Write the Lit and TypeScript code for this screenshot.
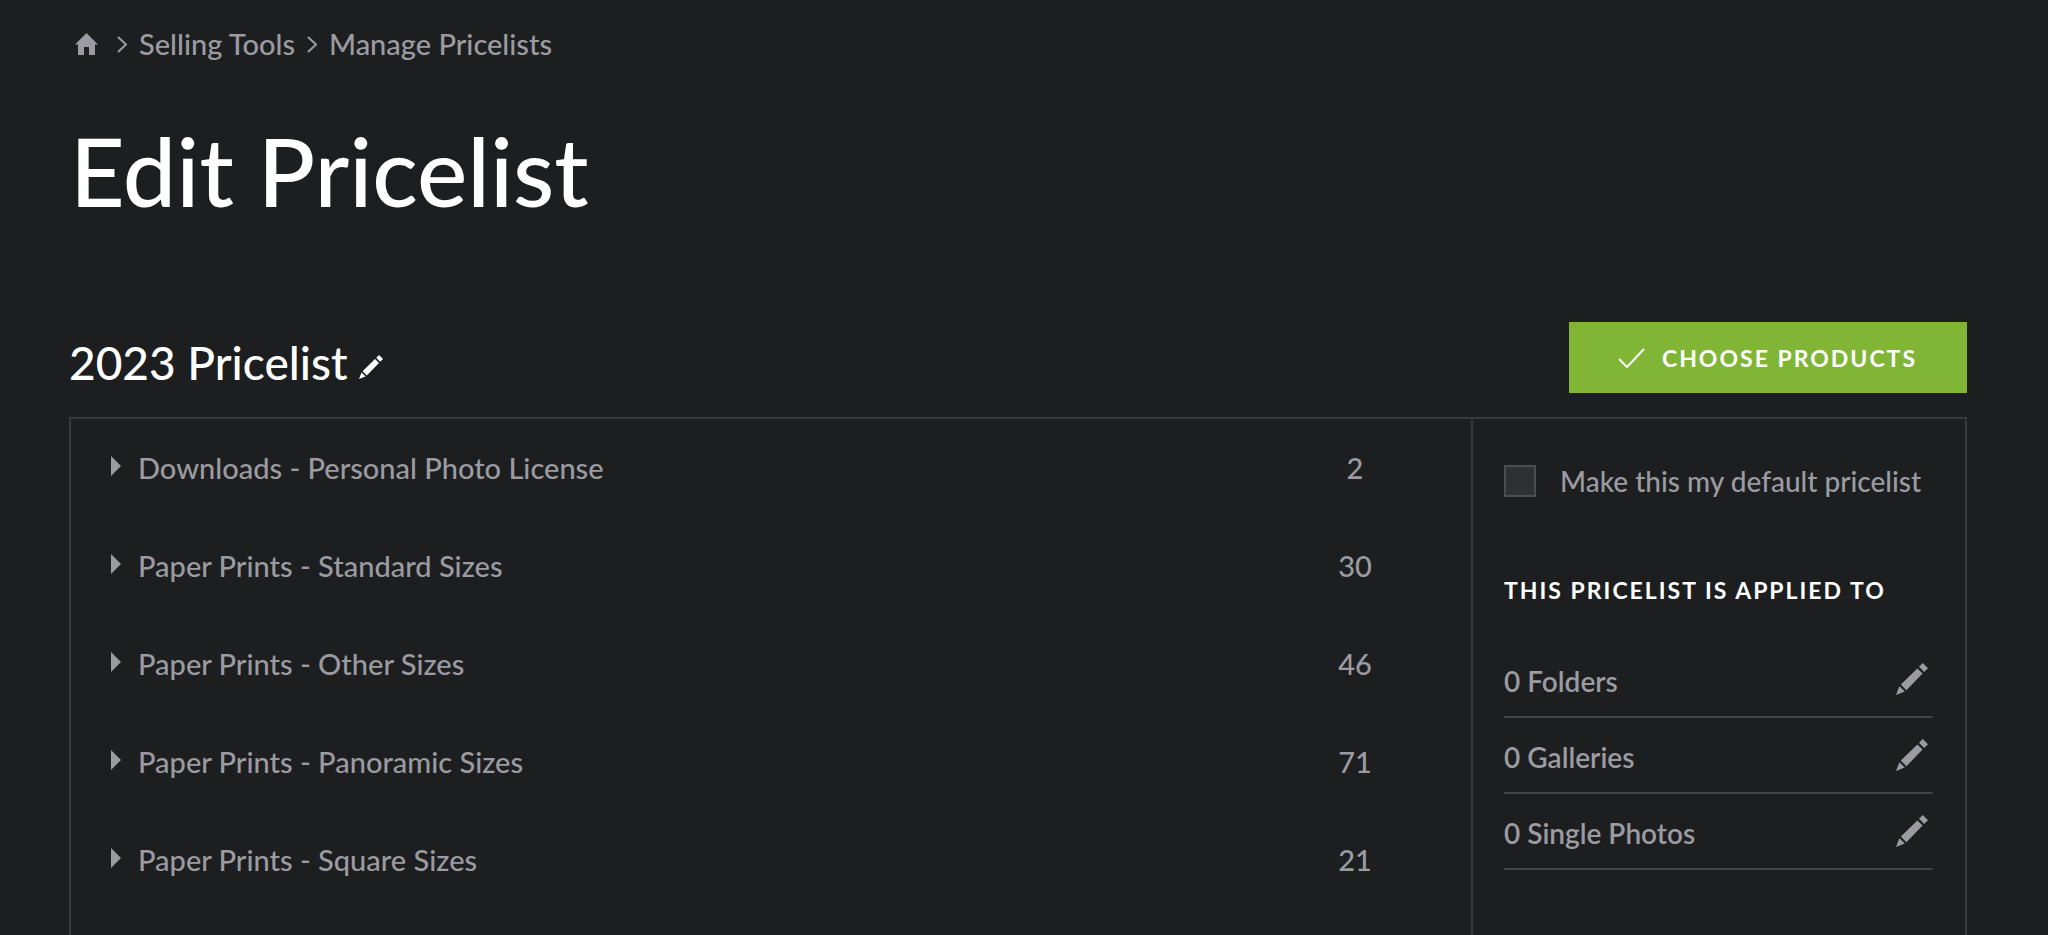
import { LitElement, html, css, svg } from "lit";
import { customElement, property } from "lit/decorators.js";

const groups = [
  { name: "Downloads - Personal Photo License", count: 2 },
  { name: "Paper Prints - Standard Sizes", count: 30 },
  { name: "Paper Prints - Other Sizes", count: 46 },
  { name: "Paper Prints - Panoramic Sizes", count: 71 },
  { name: "Paper Prints - Square Sizes", count: 21 },
];

const targets = [
  { count: 0, label: "Folders" },
  { count: 0, label: "Galleries" },
  { count: 0, label: "Single Photos" },
];

const pencil = svg`
  <path d="M0 32 L3.4 23.2 L8.8 28.6 Z"/>
  <path d="M4.8 21.6 L21.4 5.4 L26.6 10.6 L10.4 27.2 Z"/>
  <path d="M23 3.8 L26.8 0 L32 5.2 L28.2 9 Z"/>`;

@customElement("price-group")
export class PriceGroup extends LitElement {
  @property() name = "";
  @property({ type: Number }) count = 0;

  static styles = css`
    :host { display: block; }
    .row {
      display: flex; align-items: center; width: 100%; height: 98px;
      padding: 0; border: 0; background: none; color: inherit;
      font: inherit; text-align: left; cursor: pointer;
    }
    .arrow { width: 10px; height: 20px; margin: 0 17px 4px 0; fill: #9b9ba1; }
    .name { flex: 1; }
    .count { width: 96px; text-align: center; }
  `;

  render() {
    return html`<button class="row" type="button" aria-expanded="false">
      <svg class="arrow" viewBox="0 0 10 20" aria-hidden="true"><path d="M0 0 L10 10 L0 20 Z"/></svg>
      <span class="name">${this.name}</span><span class="count">${this.count}</span>
    </button>`;
  }
}

@customElement("app-root")
export class AppRoot extends LitElement {
  static styles = css`
    :host {
      display: block; box-sizing: border-box; min-height: 100vh;
      background: #1d1e20; color: #9b9ba1;
      font: 500 28px/36px Lato, "Liberation Sans", sans-serif;
    }
    .page { display: flex; flex-direction: column; box-sizing: border-box; height: 100vh; padding: 24px 81px 0 69px; overflow: hidden; }
    .crumbs { display: flex; align-items: center; padding-left: 6px; height: 40px; font-size: 29px; }
    .crumbs a { color: inherit; text-decoration: none; }
    .home { display: block; width: 23px; height: 22px; fill: #9b9ba1; }
    .sep { width: 10px; height: 17px; margin: 0 12px; fill: none; stroke: #9b9ba1; stroke-width: 2; }
    .sep.first { margin-left: 19px; }
    .title { margin: 50px 0 0; padding-left: 1px; color: #fff; font-size: 95px; line-height: 112px; font-weight: 500; }
    .bar { display: flex; justify-content: space-between; align-items: flex-start; margin-top: 96px; }
    .name { display: flex; align-items: flex-end; gap: 11px; margin: 13px 0 0; color: #fff; font-size: 46px; line-height: 56px; font-weight: 500; }
    .icon { padding: 0; border: 0; background: none; cursor: pointer; display: block; fill: #9b9ba1; }
    .icon svg { display: block; width: 32px; height: 32px; }
    .icon.small { padding-bottom: 12px; fill: #fff; }
    .icon.small svg { width: 24px; height: 24px; }
    .choose {
      display: flex; align-items: center; gap: 17px; height: 71px; padding: 0 50px 0 49px;
      border: 0; background: #80b536; color: #fff; cursor: pointer;
      font: 700 23px/28px Lato, "Liberation Sans", sans-serif; letter-spacing: 2px;
    }
    .check { width: 27px; height: 20px; fill: none; stroke: #fff; stroke-width: 2; }
    .panel { display: flex; flex: 1; min-height: 0; margin-top: 24px; border: 2px solid #38393b; border-bottom: 0; }
    .groups { flex: 1; padding: 0 68px 0 40px; border-right: 2px solid #38393b; font-size: 29px; }
    .side { box-sizing: border-box; width: 492px; padding: 44px 32px 0 31px; }
    .default { display: flex; align-items: center; gap: 24px; white-space: nowrap; }
    .box { appearance: none; flex: none; width: 32px; height: 32px; margin: 0; background: #2f3034; border: 2px solid #4c4d51; }
    .heading { margin: 73px 0 0; color: #fff; font-size: 23px; line-height: 36px; font-weight: 700; letter-spacing: 2px; white-space: nowrap; }
    .targets { list-style: none; margin: 34px 0 0; padding: 0; font-weight: 600; }
    .target { display: flex; justify-content: space-between; align-items: center; height: 74px; padding-right: 5px; border-bottom: 2px solid #434448; }
    .target span { padding-top: 4px; }
  `;

  render() {
    return html`<main class="page">
      <nav class="crumbs" aria-label="Breadcrumb">
        <a href="#" aria-label="Home"><svg class="home" viewBox="0 0 23 22"><path d="M11.5 0 L23 11.5 H20 V22 H14 V14 H9 V22 H3 V11.5 H0 Z"/></svg></a>
        <svg class="sep first" viewBox="0 0 10 17"><path d="M1 1 L9 8.5 L1 16"/></svg>
        <a href="#">Selling Tools</a>
        <svg class="sep" viewBox="0 0 10 17"><path d="M1 1 L9 8.5 L1 16"/></svg>
        <a href="#">Manage Pricelists</a>
      </nav>
      <h1 class="title">Edit Pricelist</h1>
      <div class="bar">
        <h2 class="name">2023 Pricelist
          <button class="icon small" type="button" aria-label="Rename"><svg viewBox="0 0 32 32">${pencil}</svg></button>
        </h2>
        <button class="choose" type="button">
          <svg class="check" viewBox="0 0 27 20"><path d="M1 11 L9 19 L26 1"/></svg>CHOOSE PRODUCTS
        </button>
      </div>
      <section class="panel">
        <div class="groups">
          ${groups.map((g) => html`<price-group .name=${g.name} .count=${g.count}></price-group>`)}
        </div>
        <aside class="side">
          <label class="default"><input class="box" type="checkbox" />Make this my default pricelist</label>
          <h3 class="heading">THIS PRICELIST IS APPLIED TO</h3>
          <ul class="targets">
            ${targets.map((t) => html`<li class="target"><span>${t.count} ${t.label}</span>
              <button class="icon" type="button" aria-label="Edit ${t.label}"><svg viewBox="0 0 32 32">${pencil}</svg></button></li>`)}
          </ul>
        </aside>
      </section>
    </main>`;
  }
}
